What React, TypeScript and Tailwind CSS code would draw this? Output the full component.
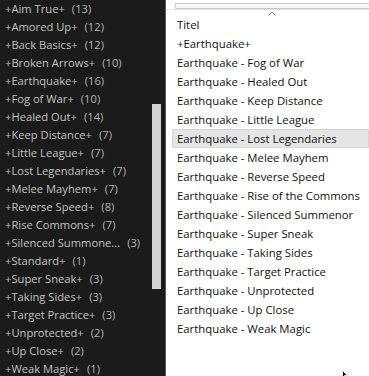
import React from "react";

const left: [string, string][] = [
  ["+Aim True+", "(13)"],
  ["+Amored Up+", "(12)"],
  ["+Back Basics+", "(12)"],
  ["+Broken Arrows+", "(10)"],
  ["+Earthquake+", "(16)"],
  ["+Fog of War+", "(10)"],
  ["+Healed Out+", "(14)"],
  ["+Keep Distance+", "(7)"],
  ["+Little League+", "(7)"],
  ["+Lost Legendaries+", "(7)"],
  ["+Melee Mayhem+", "(7)"],
  ["+Reverse Speed+", "(8)"],
  ["+Rise Commons+", "(7)"],
  ["+Silenced Summone...", "(3)"],
  ["+Standard+", "(1)"],
  ["+Super Sneak+", "(3)"],
  ["+Taking Sides+", "(3)"],
  ["+Target Practice+", "(3)"],
  ["+Unprotected+", "(2)"],
  ["+Up Close+", "(2)"],
  ["+Weak Magic+", "(1)"],
];

const right = [
  "+Earthquake+",
  "Earthquake - Fog of War",
  "Earthquake - Healed Out",
  "Earthquake - Keep Distance",
  "Earthquake - Little League",
  "Earthquake - Lost Legendaries",
  "Earthquake - Melee Mayhem",
  "Earthquake - Reverse Speed",
  "Earthquake - Rise of the Commons",
  "Earthquake - Silenced Summenor",
  "Earthquake - Super Sneak",
  "Earthquake - Taking Sides",
  "Earthquake - Target Practice",
  "Earthquake - Unprotected",
  "Earthquake - Up Close",
  "Earthquake - Weak Magic",
];

export default function App() {
  return (
    <div
      className="relative flex h-[376px] w-[369px] overflow-hidden bg-white text-[11.2px]"
      style={{ fontFamily: '"Open Sans", "Noto Sans", sans-serif' }}
    >
      {/* Left dark panel */}
      <div className="flex h-full w-[165px] shrink-0 bg-[#1b1b1b]">
        <div className="flex w-[150px] flex-col pl-[5px]">
          {left.map(([n, c]) => (
            <div key={n} className="flex h-[18px] items-center gap-[7px] whitespace-nowrap leading-[18px] text-[#c2c2c2]">
              <span>{n}</span>
              <span className="text-[#b4b4b4]">{c}</span>
            </div>
          ))}
        </div>
        <div className="w-[15px] pt-[104px]">
          <div className="ml-[2px] h-[185px] w-[9px] bg-[#d3d3d3]" />
        </div>
      </div>
      <div className="w-[1px] shrink-0 bg-[#5a5a5a]" />
      {/* Right list panel */}
      <div className="flex min-w-0 flex-1 flex-col text-[11.35px] text-[#111]">
        <div className="h-[10px] border-b border-[#e3e3e3] pl-[9px]">
          <div className="mt-[3px] h-[6px] rounded-bl-[2px] border-l border-t border-b border-[#c9c9c9] bg-[#f6f6f6]" />
        </div>
        <div className="flex h-[5px] items-start pl-[102px]">
          <svg width="8" height="5" viewBox="0 0 8 5" className="mt-[1px]">
            <path d="M0.5 4.5 L4 1 L7.5 4.5" fill="none" stroke="#8a8a8a" strokeWidth="1" />
          </svg>
        </div>
        <div className="h-[19px] pl-[11px] leading-[19px] text-[#111]">Titel</div>
        {right.map((t) => {
          const sel = t === "Earthquake - Lost Legendaries";
          return (
            <div
              key={t}
              className={
                "ml-[6px] h-[19px] whitespace-nowrap border pl-[4px] leading-[17px] " +
                (sel ? "border-[#d6d6d6] bg-[#e5e5e5]" : "border-transparent")
              }
            >
              {t}
            </div>
          );
        })}
      </div>
      <svg className="absolute left-[342px] top-[370px]" width="8" height="8" viewBox="0 0 8 8">
        <path d="M0.5 0.5 L0.5 7.5 L2.5 5.5 L5.5 5.5 Z" fill="#000" stroke="#fff" strokeWidth="0.8" />
      </svg>
    </div>
  );
}
